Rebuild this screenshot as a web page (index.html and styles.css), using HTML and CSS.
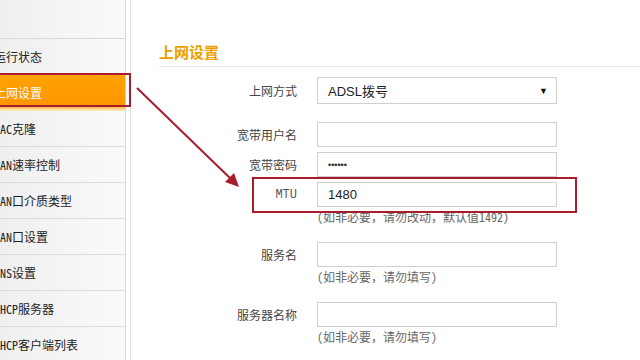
FILE: index.html
```html
<html>
<head>
<meta http-equiv="content-type" content="text/html; charset=UTF-8">
    <title>上网设置</title>
    <link rel="stylesheet" href="styles.css">
</head>
<body>
    <div class="page">
        <div class="menu">
            <div class="menuTop"></div>
            <div class="menuItem">运行状态</div>
            <div class="menuItem active">上网设置</div>
            <div class="menuItem">MAC克隆</div>
            <div class="menuItem">WAN速率控制</div>
            <div class="menuItem">WAN口介质类型</div>
            <div class="menuItem">LAN口设置</div>
            <div class="menuItem">DNS设置</div>
            <div class="menuItem">DHCP服务器</div>
            <div class="menuItem">DHCP客户端列表</div>
        </div>

        <div class="content">
            <div class="title">上网设置</div>

            <div class="form">
                <div class="row">
                    <label>上网方式</label>
                    <div class="select">ADSL拨号<span class="caret">&#9660;</span></div>
                </div>
                <div class="row gapBig">
                    <label>宽带用户名</label>
                    <input type="text" value="">
                </div>
                <div class="row gapSmall">
                    <label>宽带密码</label>
                    <input type="password" value="123456">
                </div>
                <div class="row gapSmall">
                    <label class="mono">MTU</label>
                    <input type="text" value="1480">
                </div>
                <div class="hint">(如非必要，请勿改动，默认值1492)</div>
                <div class="row gapMid">
                    <label>服务名</label>
                    <input type="text" value="">
                </div>
                <div class="hint">(如非必要，请勿填写)</div>
                <div class="row gapMid">
                    <label>服务器名称</label>
                    <input type="text" value="">
                </div>
                <div class="hint">(如非必要，请勿填写)</div>
            </div>
        </div>
    </div>

    <!-- red annotations drawn over the screenshot -->
    <svg class="marks" width="640" height="360" viewBox="0 0 640 360">
        <rect x="-4" y="74" width="134" height="32" fill="none" stroke="#a81c2d" stroke-width="2"/>
        <rect x="253" y="178" width="323" height="34" fill="none" stroke="#a81c2d" stroke-width="2"/>
        <line x1="137" y1="88" x2="232" y2="180" stroke="#a81c2d" stroke-width="2"/>
        <path d="M239 187 L225 182 L234 173 Z" fill="#a81c2d"/>
    </svg>
</body>
</html>
```

FILE: styles.css
```css
body {
    margin: 0;
    width: 640px;
    height: 360px;
    overflow: hidden;
    background-color: #fff;
    color: #333;
    font-family: "Noto Sans Mono CJK SC", "Noto Sans CJK SC", sans-serif;
    font-size: 12px;
}

.page {
    display: flex;
    height: 360px;
}

.menu {
    width: 125px;
    flex-shrink: 0;
    overflow: hidden;
    background: linear-gradient(to right, #efefef, #fafafa);
    border-right: 1px solid #d6d6d6;
    margin-right: 4px;
}

.menuTop {
    height: 38px;
    border-bottom: 1px solid #d9d9d9;
}

.menuItem {
    height: 35px;
    line-height: 35px;
    border-bottom: 1px solid #dcdcdc;
    text-indent: -6px;
    white-space: nowrap;
    color: #222;
    font-size: 12px;
}

.menuItem.active {
    background: linear-gradient(to bottom, #ffa200, #ff9600 85%, #ffe3a8);
    color: #fff;
    border-bottom-color: #ffe9bd;
}

.content {
    flex: 1;
    border-left: 1px solid #e3e3e3;
    padding: 42px 0 0 28px;
}

.title {
    font-family: "Noto Sans CJK SC", sans-serif;
    font-size: 15px;
    font-weight: 700;
    line-height: 20px;
    color: #eba000;
    padding-bottom: 4px;
    border-bottom: 1px solid #e6e6e6;
}

.form {
    margin-top: 10px;
}

.row {
    display: flex;
    align-items: center;
}

.row label {
    width: 138px;
    margin-right: 20px;
    text-align: right;
    color: #444;
}

.row label.mono {
    font-family: "Liberation Mono", monospace;
    font-size: 12px;
    color: #555;
}

.gapSmall {
    margin-top: 5px;
}

.gapMid {
    margin-top: 15px;
}

.gapBig {
    margin-top: 18px;
}

input[type=text],
input[type=password],
.select {
    box-sizing: border-box;
    width: 240px;
    height: 25px;
    margin: 0;
    padding: 0 10px;
    border: 1px solid #cfcfcf;
    background-color: #fff;
    font-family: "Liberation Sans", "Noto Sans CJK SC", sans-serif;
    font-size: 13px;
    color: #222;
    outline: none;
}

input[type=password] {
    font-size: 9px;
    letter-spacing: 0;
}

.select {
    height: 27px;
    display: flex;
    align-items: center;
    justify-content: space-between;
}

.caret {
    font-size: 9px;
    color: #111;
    margin-right: -2px;
}

.hint {
    margin-left: 158px;
    line-height: 20px;
    color: #666;
}

.marks {
    position: absolute;
    left: 0;
    top: 0;
    pointer-events: none;
}
```
